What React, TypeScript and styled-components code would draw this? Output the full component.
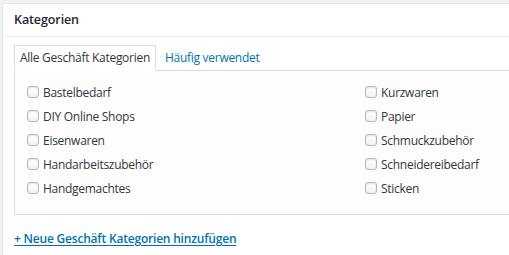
import { FC } from "react";
import styled, { createGlobalStyle } from "styled-components";

const GlobalStyle = createGlobalStyle`
	html, body {
		margin: 0;
		padding: 0;
		overflow: hidden;
		background: #f1f1f1;
	}
	body {
		font-family: "Open Sans", "DejaVu Sans", sans-serif;
		font-size: 12px;
		letter-spacing: -0.28px;
		color: #444;
	}
`;

const leftItems = [
	"Bastelbedarf",
	"DIY Online Shops",
	"Eisenwaren",
	"Handarbeitszubehör",
	"Handgemachtes",
];

const rightItems = [
	"Kurzwaren",
	"Papier",
	"Schmuckzubehör",
	"Schneidereibedarf",
	"Sticken",
];

const Page = styled.div`
	padding: 3px 0 0 2px;
	width: 740px;
`;

const Postbox = styled.div`
	background: #fff;
	border: 1px solid #e5e5e5;
	box-shadow: 0 1px 1px rgba(0, 0, 0, 0.04);
	min-height: 260px;
`;

const Header = styled.h2`
	margin: 0;
	padding: 0 11px;
	height: 32px;
	line-height: 32px;
	font-size: 12.5px;
	letter-spacing: -0.1px;
	font-weight: 600;
	color: #23282d;
	border-bottom: 1px solid #eee;
`;

const Inside = styled.div`
	padding: 8px 11px 0;
`;

const Tabs = styled.ul`
	display: flex;
	gap: 3px;
	margin: 0;
	padding: 0;
	list-style: none;
	position: relative;
	z-index: 1;
`;

const Tab = styled.li<{ $active?: boolean }>`
	padding: 0 5px;
	height: 24px;
	line-height: 24px;
	border: 1px solid ${(p) => (p.$active ? "#ddd" : "transparent")};
	border-bottom: 1px solid ${(p) => (p.$active ? "#fff" : "transparent")};
	background: ${(p) => (p.$active ? "#fff" : "transparent")};
	color: ${(p) => (p.$active ? "#32373c" : "#0073aa")};
	cursor: pointer;
`;

const Panel = styled.div`
	margin-top: -1px;
	border: 1px solid #ddd;
	background: #fdfdfd;
	padding: 9px 12px 14px;
`;

const Grid = styled.div`
	display: grid;
	grid-template-columns: 338px 338px;
`;

const Column = styled.ul`
	margin: 0;
	padding: 0;
	list-style: none;
`;

const Item = styled.li`
	display: flex;
	align-items: center;
	gap: 4px;
	height: 24px;
	color: #32373c;
`;

const Box = styled.span`
	width: 10px;
	height: 10px;
	border: 1px solid #b4b9be;
	border-radius: 3px;
	background: linear-gradient(#fff, #f1f1f1);
	box-shadow: inset 0 1px 2px rgba(0, 0, 0, 0.1);
	flex: none;
`;

const AddLink = styled.a`
	display: inline-block;
	margin-top: 14px;
	line-height: 20px;
	color: #0073aa;
	text-decoration: underline;
	text-underline-offset: 2px;
	font-weight: 600;
	letter-spacing: -0.2px;
`;

const CategoryColumn: FC<{ items: string[] }> = ({ items }) => (
	<Column>
		{items.map((name) => (
			<Item key={name}>
				<Box />
				{name}
			</Item>
		))}
	</Column>
);

const App: FC = () => {
	return (
		<>
			<GlobalStyle />
			<Page>
				<Postbox>
					<Header>Kategorien</Header>
					<Inside>
						<Tabs>
							<Tab $active>Alle Geschäft Kategorien</Tab>
							<Tab>Häufig verwendet</Tab>
						</Tabs>
						<Panel>
							<Grid>
								<CategoryColumn items={leftItems} />
								<CategoryColumn items={rightItems} />
							</Grid>
						</Panel>
						<AddLink href="#">+ Neue Geschäft Kategorien hinzufügen</AddLink>
					</Inside>
				</Postbox>
			</Page>
		</>
	);
};

export default App;
